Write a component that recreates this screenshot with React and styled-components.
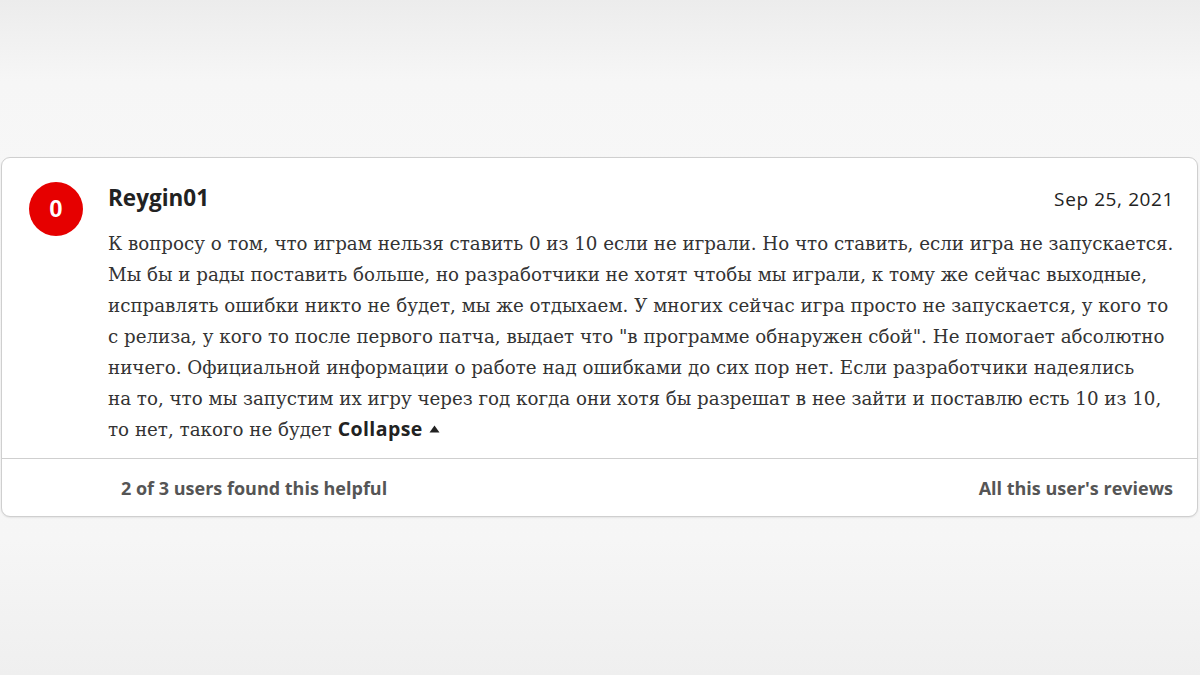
import React from 'react'
import styled, { createGlobalStyle } from 'styled-components'

const GlobalStyle = createGlobalStyle`
  html, body {
    margin: 0;
    padding: 0;
  }
  body {
    width: 1200px;
    height: 675px;
    overflow: hidden;
    background: linear-gradient(180deg, #ececec 0%, #f6f6f6 12%, #f8f8f8 40%, #f6f6f6 80%, #efefef 100%);
    font-family: "Open Sans", "Liberation Sans", sans-serif;
  }
`

const Page = styled.div`
  padding: 157px 2px 0 1px;
`

const Card = styled.div`
  background: #fff;
  border: 1px solid #cfcfcf;
  border-radius: 9px;
  box-shadow: 0 1px 2px rgba(0, 0, 0, 0.08);
`

const Main = styled.div`
  display: grid;
  grid-template-columns: 54px 1fr;
  column-gap: 25px;
  padding: 24px 23px 13px 27px;
`

const Score = styled.div`
  width: 54px;
  height: 54px;
  border-radius: 50%;
  background: #e60000;
  color: #fff;
  display: flex;
  align-items: center;
  justify-content: center;
  font-family: "Liberation Sans", Arial, sans-serif;
  font-weight: 700;
  font-size: 24px;
`

const Content = styled.div`
  min-width: 0;
`

const Header = styled.div`
  display: flex;
  justify-content: space-between;
  align-items: baseline;
  height: 32px;
`

const Author = styled.span`
  font-family: "Open Sans", sans-serif;
  font-weight: 700;
  font-size: 22.5px;
  color: #222;
`

const DateText = styled.span`
  font-family: "Open Sans", sans-serif;
  font-size: 19px;
  letter-spacing: 0.6px;
  color: #222;
`

const Body = styled.p`
  margin: 14px 0 0;
  font-family: "DejaVu Serif", Georgia, serif;
  font-size: 18.25px;
  line-height: 31px;
  color: #333;
  white-space: nowrap;
`

const Collapse = styled.button`
  border: 0;
  background: none;
  padding: 0;
  font-family: "Open Sans", sans-serif;
  font-weight: 700;
  font-size: 19.5px;
  letter-spacing: 0.4px;
  color: #222;
  cursor: pointer;
  display: inline-flex;
  align-items: center;
  gap: 6px;
`

const Footer = styled.div`
  border-top: 1px solid #cfcfcf;
  display: flex;
  justify-content: space-between;
  align-items: center;
  height: 57px;
  padding: 0 24px 0 119px;
`

const FooterLink = styled.span`
  font-family: "Open Sans", sans-serif;
  font-weight: 700;
  font-size: 18px;
  color: #555;
`

const lines = [
  'К вопросу о том, что играм нельзя ставить 0 из 10 если не играли. Но что ставить, если игра не запускается.',
  'Мы бы и рады поставить больше, но разработчики не хотят чтобы мы играли, к тому же сейчас выходные,',
  'исправлять ошибки никто не будет, мы же отдыхаем. У многих сейчас игра просто не запускается, у кого то',
  'с релиза, у кого то после первого патча, выдает что "в программе обнаружен сбой". Не помогает абсолютно',
  'ничего. Официальной информации о работе над ошибками до сих пор нет. Если разработчики надеялись',
  'на то, что мы запустим их игру через год когда они хотя бы разрешат в нее зайти и поставлю есть 10 из 10,',
  'то нет, такого не будет',
]

export default function App() {
  return (
    <>
      <GlobalStyle />
      <Page>
        <Card>
          <Main>
            <Score>0</Score>
            <Content>
              <Header>
                <Author>Reygin01</Author>
                <DateText>Sep 25, 2021</DateText>
              </Header>
              <Body>
                {lines.map((line, i) => (
                  <React.Fragment key={i}>
                    {line}
                    {i < lines.length - 1 ? <br /> : ' '}
                  </React.Fragment>
                ))}
                <Collapse>
                  Collapse
                  <svg width="11" height="8" viewBox="0 0 11 8">
                    <path d="M5.5 0.5 L10.5 7.5 L0.5 7.5 Z" fill="#222" />
                  </svg>
                </Collapse>
              </Body>
            </Content>
          </Main>
          <Footer>
            <FooterLink>2 of 3 users found this helpful</FooterLink>
            <FooterLink>All this user's reviews</FooterLink>
          </Footer>
        </Card>
      </Page>
    </>
  )
}
